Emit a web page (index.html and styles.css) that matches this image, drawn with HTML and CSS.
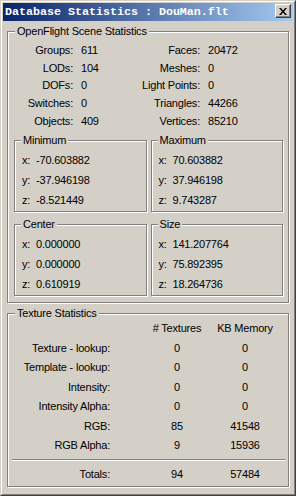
FILE: index.html
```html
<!DOCTYPE html>
<html lang="en">
  <head>
    <meta charset="UTF-8" />
    <title>Database Statistics</title>
    <link rel="stylesheet" href="styles.css">
  </head>

  <body>
    <div class="window">
      <div class="frame">
        <div class="titlebar">
          <span class="title">Database Statistics : DouMan.flt</span>
          <button class="close" aria-label="Close">
            <svg width="8" height="7" viewBox="0 0 8 7">
              <path d="M0 0h2l2 2.4 2-2.4h2l-3 3.5 3 3.5h-2l-2-2.4-2 2.4h-2l3-3.5z" fill="#000" />
            </svg>
          </button>
        </div>

        <div class="client">
          <fieldset class="group">
            <legend>OpenFlight Scene Statistics</legend>
            <div class="counts">
              <span class="lbl">Groups:</span><span class="val">611</span>
              <span class="lbl">Faces:</span><span class="val">20472</span>
              <span class="lbl">LODs:</span><span class="val">104</span>
              <span class="lbl">Meshes:</span><span class="val">0</span>
              <span class="lbl">DOFs:</span><span class="val">0</span>
              <span class="lbl">Light Points:</span><span class="val">0</span>
              <span class="lbl">Switches:</span><span class="val">0</span>
              <span class="lbl">Triangles:</span><span class="val">44266</span>
              <span class="lbl">Objects:</span><span class="val">409</span>
              <span class="lbl">Vertices:</span><span class="val">85210</span>
            </div>

            <div class="bounds">
              <fieldset class="group sub">
                <legend>Minimum</legend>
                <div class="coords">
                  <span>x:</span><span>-70.603882</span>
                  <span>y:</span><span>-37.946198</span>
                  <span>z:</span><span>-8.521449</span>
                </div>
              </fieldset>
              <fieldset class="group sub">
                <legend>Maximum</legend>
                <div class="coords">
                  <span>x:</span><span>70.603882</span>
                  <span>y:</span><span>37.946198</span>
                  <span>z:</span><span>9.743287</span>
                </div>
              </fieldset>
              <fieldset class="group sub">
                <legend>Center</legend>
                <div class="coords">
                  <span>x:</span><span>0.000000</span>
                  <span>y:</span><span>0.000000</span>
                  <span>z:</span><span>0.610919</span>
                </div>
              </fieldset>
              <fieldset class="group sub">
                <legend>Size</legend>
                <div class="coords">
                  <span>x:</span><span>141.207764</span>
                  <span>y:</span><span>75.892395</span>
                  <span>z:</span><span>18.264736</span>
                </div>
              </fieldset>
            </div>
          </fieldset>

          <fieldset class="group textures">
            <legend>Texture Statistics</legend>
            <div class="tex-head">
              <span></span><span># Textures</span><span>KB Memory</span>
            </div>
            <div class="tex-row"><span>Texture - lookup:</span><span>0</span><span>0</span></div>
            <div class="tex-row"><span>Template - lookup:</span><span>0</span><span>0</span></div>
            <div class="tex-row"><span>Intensity:</span><span>0</span><span>0</span></div>
            <div class="tex-row"><span>Intensity Alpha:</span><span>0</span><span>0</span></div>
            <div class="tex-row"><span>RGB:</span><span>85</span><span>41548</span></div>
            <div class="tex-row"><span>RGB Alpha:</span><span>9</span><span>15936</span></div>
            <div class="separator"></div>
            <div class="tex-row total"><span>Totals:</span><span>94</span><span>57484</span></div>
          </fieldset>
        </div>
      </div>
    </div>
  </body>
</html>
```

FILE: styles.css
```css
* {
  box-sizing: border-box;
}

body {
  margin: 0;
  background-color: #d4d0c8;
  font-family: "Liberation Sans", Arial, sans-serif;
  font-size: 11px;
  letter-spacing: -0.2px;
  color: #000;
}

/* window frame */
.window {
  width: 296px;
  height: 496px;
  border: 1px solid;
  border-color: #d4d0c8 #404040 #404040 #d4d0c8;
}
.frame {
  height: 100%;
  border: 1px solid;
  border-color: #fff #808080 #808080 #fff;
  padding: 1px;
  display: flex;
  flex-direction: column;
}

.titlebar {
  height: 18px;
  display: flex;
  align-items: flex-start;
  background: linear-gradient(to right, #0a246a, #a6caf0);
}
.title {
  font-family: "Liberation Mono", monospace;
  font-weight: bold;
  font-size: 11.67px;
  letter-spacing: 0;
  line-height: 18px;
  color: #fff;
  padding-left: 2px;
  white-space: pre;
}
.close {
  margin: 1px 2px 0 auto;
  width: 16px;
  height: 14px;
  padding: 0;
  background-color: #d4d0c8;
  border: 1px solid;
  border-color: #fff #404040 #404040 #fff;
  box-shadow: inset -1px -1px #808080;
  display: flex;
  align-items: center;
  justify-content: center;
}

.client {
  padding: 4px 4px 0;
}

/* etched group boxes */
.group {
  margin: 0;
  padding: 0;
  min-width: 0;
  border: 1px solid #808080;
  box-shadow: inset 1px 1px #fff, 1px 1px #fff;
}
.group > legend {
  margin-left: 7px;
  padding: 0 2px;
  line-height: 13px;
  background-color: #d4d0c8;
}
.sub > legend {
  margin-left: 6px;
}

.counts {
  display: grid;
  grid-template-columns: 64px 64px 63px 1fr;
  grid-auto-rows: 17.75px;
  align-items: center;
  margin-top: 3px;
  padding-left: 1px;
}
.lbl {
  text-align: right;
}
.val {
  padding-left: 8px;
}

.bounds {
  display: grid;
  grid-template-columns: 1fr 1fr;
  gap: 6px 4px;
  margin-top: 4px;
  padding: 0 5px 6px 6px;
}
.coords {
  display: grid;
  grid-template-columns: 14px 1fr;
  grid-auto-rows: 20px;
  align-items: center;
  padding: 3px 0 1px 7px;
}

.textures {
  margin-top: 4px;
}
.tex-head,
.tex-row {
  display: grid;
  grid-template-columns: 135px 68px 68px;
  text-align: center;
}
.tex-head {
  line-height: 16px;
  padding-bottom: 3px;
}
.tex-row {
  line-height: 19.5px;
}
.tex-row span:first-child {
  text-align: right;
  padding-right: 33px;
}
.separator {
  margin: 3px 3px 0 4px;
  border-top: 1px solid #808080;
  border-bottom: 1px solid #fff;
}
.total {
  margin-top: 3px;
  padding-bottom: 2px;
  line-height: 20px;
}
```
